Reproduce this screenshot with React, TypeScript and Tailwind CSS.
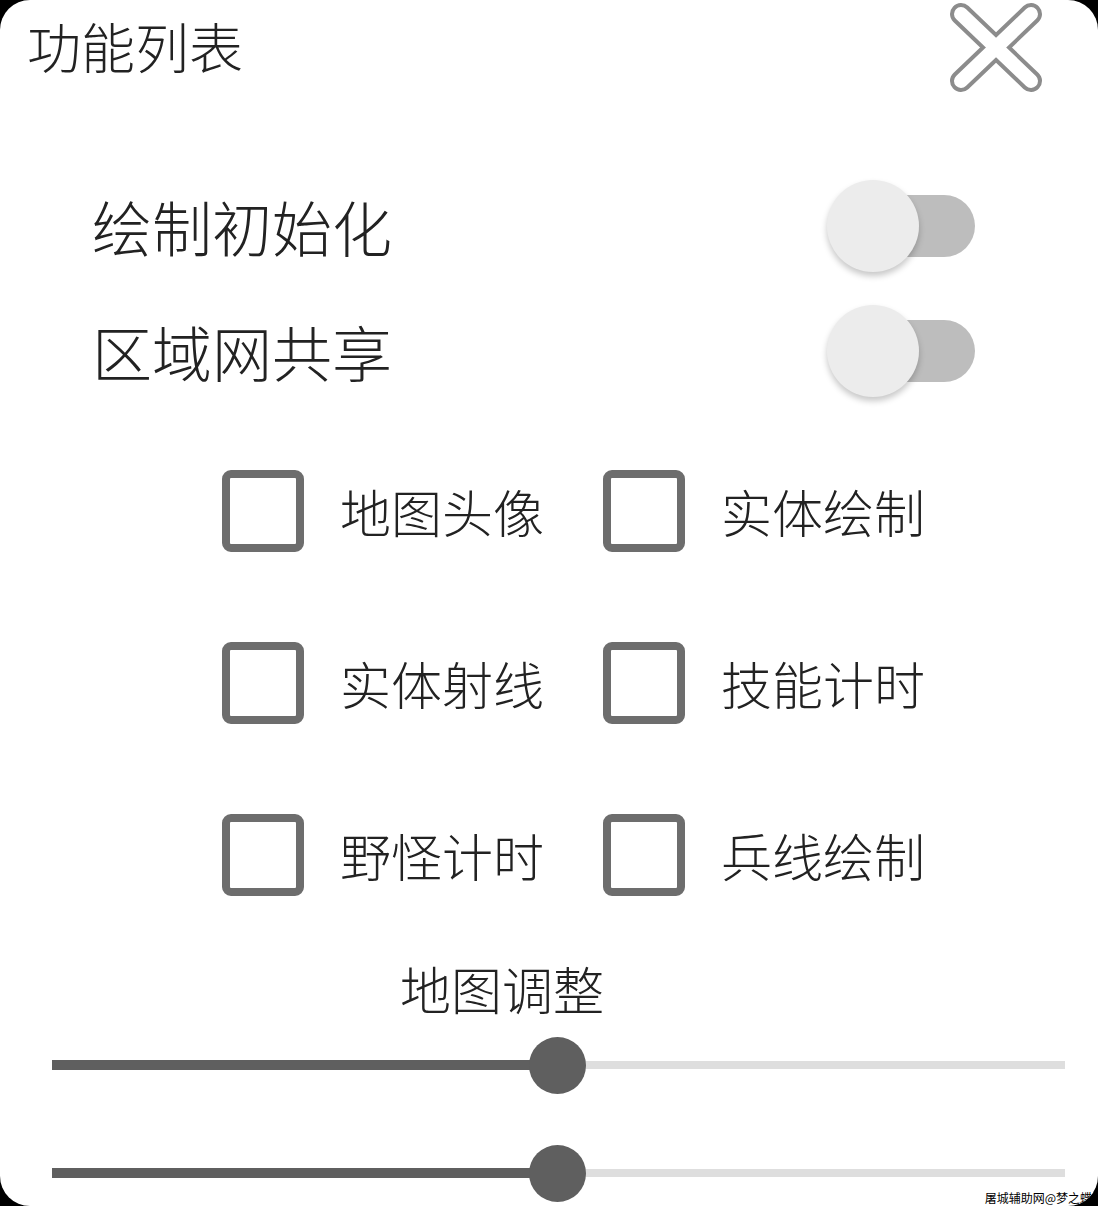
const font = { fontFamily: '"Noto Sans CJK SC", "Noto Sans", sans-serif' };

const Toggle = () => (
  <div className="relative w-[148px] h-[92px]">
    <div className="absolute right-0 top-[15px] w-[116px] h-[62px] rounded-full bg-[#bdbdbd]" />
    <div className="absolute left-0 top-0 w-[92px] h-[92px] rounded-full bg-[#ececec] shadow-[0_4px_6px_rgba(0,0,0,0.22)]" />
  </div>
);

const Check = ({ label }: { label: string }) => (
  <div className="flex items-center w-[381px] h-[82px]">
    <div className="w-[82px] h-[82px] rounded-[9px] border-[8px] border-[#6d6d6d] bg-white shrink-0" />
    <span className="ml-[36px] text-[51px] leading-none font-light text-[#222222]">{label}</span>
  </div>
);

const Slider = ({ pct }: { pct: number }) => (
  <div className="relative h-[58px] flex items-center">
    <div className="w-full h-[8px] bg-[#dedede]" />
    <div className="absolute left-0 h-[10px] bg-[#5f5f5f]" style={{ width: `${pct}%` }} />
    <div
      className="absolute w-[57px] h-[57px] -ml-[28px] rounded-full bg-[#5f5f5f]"
      style={{ left: `${pct}%` }}
    />
  </div>
);

const App = () => {
  const checks = ["地图头像", "实体绘制", "实体射线", "技能计时", "野怪计时", "兵线绘制"];

  return (
    <div className="w-[1098px] h-[1206px] bg-black" style={font}>
      <div className="relative w-full h-full rounded-[30px] bg-white overflow-hidden">
        {/* header */}
        <div className="relative h-[180px]">
          <div className="absolute left-[27px] top-[19px] text-[54px] leading-none font-light text-[#222222]">功能列表</div>
          <svg className="absolute left-[940px] top-0" width="110" height="100" viewBox="940 0 110 100">
            <g strokeLinecap="round">
              <line x1="961" y1="14" x2="1031" y2="81" stroke="#8c8c8c" strokeWidth="22" />
              <line x1="1031" y1="14" x2="961" y2="81" stroke="#8c8c8c" strokeWidth="22" />
              <line x1="961" y1="14" x2="1031" y2="81" stroke="#fff" strokeWidth="14" />
              <line x1="1031" y1="14" x2="961" y2="81" stroke="#fff" strokeWidth="14" />
            </g>
          </svg>
        </div>

        {/* switches */}
        <div className="flex flex-col gap-[33px] pl-[92px] pr-[123px]">
          <div className="flex items-center justify-between h-[92px]">
            <span className="text-[60px] leading-none font-light text-[#222222]">绘制初始化</span>
            <Toggle />
          </div>
          <div className="flex items-center justify-between h-[92px]">
            <span className="text-[60px] leading-none font-light text-[#222222]">区域网共享</span>
            <Toggle />
          </div>
        </div>

        {/* checkboxes */}
        <div className="mt-[73px] pl-[222px] grid grid-cols-[381px_381px] gap-y-[90px]">
          {checks.map((c) => (
            <Check key={c} label={c} />
          ))}
        </div>

        <div className="mt-[67px] pl-[400px] text-[51px] leading-none font-light text-[#222222]">地图调整</div>

        <div className="mt-[22px] pl-[52px] pr-[33px]">
          <Slider pct={49.85} />
        </div>
        <div className="mt-[50px] pl-[52px] pr-[33px]">
          <Slider pct={49.85} />
        </div>

        <div className="absolute right-[4px] bottom-[2px] text-[12px] leading-none text-black bg-white px-[2px]">
          屠城辅助网@梦之蝶
        </div>
      </div>
    </div>
  );
};

export default App;
